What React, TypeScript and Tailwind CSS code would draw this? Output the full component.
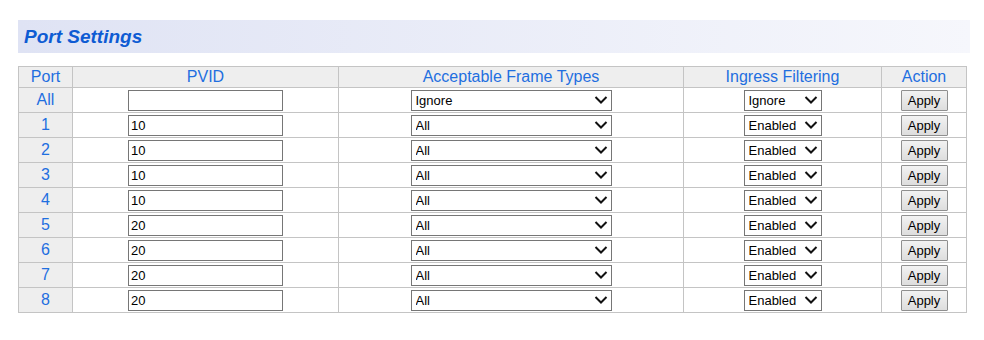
const rows = [
  { port: 'All', pvid: '', frame: 'Ignore', ingress: 'Ignore' },
  { port: '1', pvid: '10', frame: 'All', ingress: 'Enabled' },
  { port: '2', pvid: '10', frame: 'All', ingress: 'Enabled' },
  { port: '3', pvid: '10', frame: 'All', ingress: 'Enabled' },
  { port: '4', pvid: '10', frame: 'All', ingress: 'Enabled' },
  { port: '5', pvid: '20', frame: 'All', ingress: 'Enabled' },
  { port: '6', pvid: '20', frame: 'All', ingress: 'Enabled' },
  { port: '7', pvid: '20', frame: 'All', ingress: 'Enabled' },
  { port: '8', pvid: '20', frame: 'All', ingress: 'Enabled' },
];

const Chevron = () => (
  <svg
    width="14"
    height="9"
    viewBox="0 0 14 9"
    className="pointer-events-none absolute right-[4px] top-1/2 -translate-y-1/2"
  >
    <path d="M1.5 1.5 L7 7 L12.5 1.5" fill="none" stroke="#111" strokeWidth="2" />
  </svg>
);

const Select = ({ value, options, width }: { value: string; options: string[]; width: string }) => (
  <div className={`relative mx-auto ${width}`}>
    <select
      defaultValue={value}
      className="block w-full h-[21px] appearance-none bg-white border border-[#767676] pl-[4px] pr-[20px] text-[13px] leading-[19px] text-black outline-none"
    >
      {options.map((o) => (
        <option key={o}>{o}</option>
      ))}
    </select>
    <Chevron />
  </div>
);

const cell = 'border border-[#c4c4c4] p-0 align-middle';

const App = () => {
  return (
    <div className="w-[984px] h-[340px] bg-white pl-[18px] pt-[20px] font-['Liberation_Sans',Arial,sans-serif]">
      <div className="w-[952px] h-[33px] flex items-center pl-[6px] bg-gradient-to-r from-[#dfe3f4] to-[#f6f7fc]">
        <h1 className="text-[19px] leading-[22px] font-bold italic text-[#0e5bd3]">Port Settings</h1>
      </div>

      <table className="mt-[13px] w-[948px] border-collapse table-fixed border border-[#b8b8b8]">
        <colgroup>
          <col className="w-[54px]" />
          <col className="w-[266px]" />
          <col className="w-[345px]" />
          <col className="w-[198px]" />
          <col className="w-[85px]" />
        </colgroup>
        <thead>
          <tr className="h-[21px] bg-[#eeeeee] text-[16px] leading-[18px] text-[#1f6fe0]">
            <th className={`${cell} font-normal`}>Port</th>
            <th className={`${cell} font-normal`}>PVID</th>
            <th className={`${cell} font-normal`}>Acceptable Frame Types</th>
            <th className={`${cell} font-normal`}>Ingress Filtering</th>
            <th className={`${cell} font-normal`}>Action</th>
          </tr>
        </thead>
        <tbody>
          {rows.map((r) => (
            <tr key={r.port} className="h-[25px]">
              <td className={`${cell} bg-[#eeeeee] text-center text-[16px] leading-[18px] text-[#1f6fe0]`}>{r.port}</td>
              <td className={cell}>
                <input
                  defaultValue={r.pvid}
                  className="block mx-auto w-[155px] h-[21px] border border-[#767676] px-[2px] text-[13px] text-black outline-none"
                />
              </td>
              <td className={cell}>
                <Select
                  value={r.frame}
                  options={r.port === 'All' ? ['Ignore', 'All', 'Tagged Only', 'Untagged Only'] : ['All', 'Tagged Only', 'Untagged Only']}
                  width="w-[201px]"
                />
              </td>
              <td className={cell}>
                <Select
                  value={r.ingress}
                  options={r.port === 'All' ? ['Ignore', 'Enabled', 'Disabled'] : ['Enabled', 'Disabled']}
                  width="w-[78px]"
                />
              </td>
              <td className={cell}>
                <button className="block mx-auto w-[47px] h-[21px] border border-[#8f8f8f] rounded-[1px] bg-gradient-to-b from-[#f2f2f2] to-[#dddddd] text-[13px] text-black leading-none">
                  Apply
                </button>
              </td>
            </tr>
          ))}
        </tbody>
      </table>
    </div>
  );
};

export default App;
